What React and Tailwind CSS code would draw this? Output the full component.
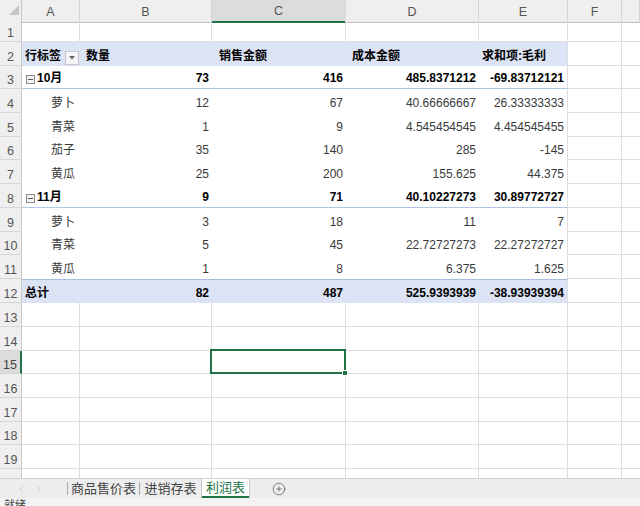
import { ChevronLeft, ChevronRight, CirclePlus } from "lucide-react";
import clsx from "clsx";

const COLS = "grid grid-cols-[22px_58px_132px_134px_133px_89px_54px_18px]";
const HEIGHTS = [24, 24, 23, 24, 24, 23, 24, 24, 24, 23, 24, 24, 24, 24, 23, 24, 24, 23, 24];
const H = { 24: "h-[24px]", 23: "h-[23px]" };

const pivot = [
  { type: "month", label: "10月", v: ["73", "416", "485.8371212", "-69.83712121"] },
  { type: "item", label: "萝卜", v: ["12", "67", "40.66666667", "26.33333333"] },
  { type: "item", label: "青菜", v: ["1", "9", "4.545454545", "4.454545455"] },
  { type: "item", label: "茄子", v: ["35", "140", "285", "-145"] },
  { type: "item", label: "黄瓜", v: ["25", "200", "155.625", "44.375"] },
  { type: "month", label: "11月", v: ["9", "71", "40.10227273", "30.89772727"] },
  { type: "item", label: "萝卜", v: ["3", "18", "11", "7"] },
  { type: "item", label: "青菜", v: ["5", "45", "22.72727273", "22.27272727"] },
  { type: "item", label: "黄瓜", v: ["1", "8", "6.375", "1.625"] },
  { type: "total", label: "总计", v: ["82", "487", "525.9393939", "-38.93939394"] },
];

function RowHead({ n, active }) {
  return (
    <div
      className={clsx(
        "flex items-end justify-center pb-[2px] text-[12.5px] leading-none border-b border-b-[#d6d6d6]",
        active
          ? "bg-[#dcdcdc] border-r-2 border-r-[#217346] text-[#444]"
          : "bg-[#efefef] border-r border-r-[#c8c8c8] text-[#555]"
      )}
    >
      {n}
    </div>
  );
}

function Empty({ last }) {
  return <div className={clsx("border-b border-[#dedede]", !last && "border-r")} />;
}

function Collapse() {
  return (
    <svg width="9" height="9" viewBox="0 0 9 9" className="mr-[2px] mb-[3px] shrink-0">
      <rect x="0.5" y="0.5" width="8" height="8" fill="#f4f4f4" stroke="#8a8a8a" />
      <line x1="2" y1="4.5" x2="7" y2="4.5" stroke="#555" />
    </svg>
  );
}

function PivotRow({ r }) {
  const base =
    r.type === "month"
      ? "font-bold text-black border-b border-b-[#b4c6e7]"
      : r.type === "total"
      ? "font-bold text-black bg-[#dbe3f4] border-t border-t-[#a9bde3]"
      : "text-[#3a3a3a]";
  return (
    <>
      <div
        className={clsx(
          base,
          "flex items-end pb-[1px] whitespace-nowrap",
          r.type === "item" ? "pl-[29px]" : r.type === "month" ? "pl-[4px]" : "pl-[3px]"
        )}
      >
        {r.type === "month" && <Collapse />}
        {r.label}
      </div>
      {r.v.map((v, i) => (
        <div
          key={i}
          className={clsx(
            base,
            "flex items-end justify-end pb-[1px] pr-[3px]",
            i === 3 && "border-r border-r-[#dedede]"
          )}
        >
          {v}
        </div>
      ))}
    </>
  );
}

function HeaderRow() {
  const hdr = "bg-[#dbe3f4] flex items-end pb-[1px] font-bold text-black whitespace-nowrap";
  return (
    <>
      <div className={clsx(hdr, "items-center justify-between pl-[3px] pr-px pt-[2px]")}>
        <span>行标签</span>
        <span className="w-[14px] h-[14px] bg-[#f7f7f7] border border-[#c4c4c4] flex items-center justify-center">
          <svg width="6" height="4" viewBox="0 0 6 4">
            <polygon points="0,0 6,0 3,3.5" fill="#666" />
          </svg>
        </span>
      </div>
      <div className={clsx(hdr, "pl-[6px]")}>数量</div>
      <div className={clsx(hdr, "pl-[7px]")}>销售金额</div>
      <div className={clsx(hdr, "pl-[6px]")}>成本金额</div>
      <div className={clsx(hdr, "pl-[3px] border-r border-r-[#dedede]")}>求和项:毛利</div>
    </>
  );
}

export default function App() {
  return (
    <div className="w-[640px] h-[506px] overflow-hidden bg-white flex flex-col text-[12px] font-['Liberation_Sans','Noto_Sans_CJK_SC',sans-serif]">
      <div className="h-[478px] overflow-hidden">
        {/* column letters */}
        <div className={clsx(COLS, "h-[18px]")}>
          <div className="bg-[#efefef] border-r border-b border-[#c8c8c8]">
            <svg width="21" height="17" viewBox="0 0 21 17">
              <polygon points="19,5 19,15 9,15" fill="#c4c4c4" />
            </svg>
          </div>
          {["A", "B", "C", "D", "E", "F", ""].map((c) => (
            <div
              key={c || "g"}
              className={clsx(
                "flex items-center justify-center pt-[2px] text-[12.5px] text-[#555] border-r border-r-[#d5d5d5]",
                c === "C"
                  ? "bg-[#dcdcdc] border-b-2 border-b-[#217346]"
                  : "bg-[#efefef] border-b border-b-[#c0c0c0]"
              )}
            >
              {c}
            </div>
          ))}
        </div>

        {HEIGHTS.map((h, i) => {
          const n = i + 1;
          let cells;
          if (n === 2) {
            cells = <HeaderRow />;
          } else if (n >= 3 && n <= 12) {
            cells = <PivotRow r={pivot[n - 3]} />;
          } else {
            cells = (
              <>
                <Empty />
                <Empty />
                {n === 15 ? (
                  <div className="relative border-r border-b border-[#dedede]">
                    <div className="absolute -left-[2px] -top-[2px] -right-[1px] -bottom-[1px] border-2 border-[#217346]" />
                    <div className="absolute -right-[3px] -bottom-[3px] w-[6px] h-[6px] bg-[#217346] border border-white" />
                  </div>
                ) : (
                  <Empty />
                )}
                <Empty />
                <Empty />
              </>
            );
          }
          return (
            <div key={n} className={clsx(COLS, H[h])}>
              <RowHead n={n} active={n === 15} />
              {cells}
              <Empty />
              <Empty last />
            </div>
          );
        })}

        {/* partial row 20 */}
        <div className={clsx(COLS, "h-[9px]")}>
          <div className="bg-[#efefef] border-r border-r-[#c8c8c8]" />
          <div className="border-r border-[#dedede]" />
          <div className="border-r border-[#dedede]" />
          <div className="border-r border-[#dedede]" />
          <div className="border-r border-[#dedede]" />
          <div className="border-r border-[#dedede]" />
          <div className="border-r border-[#dedede]" />
          <div />
        </div>
      </div>

      {/* sheet tabs */}
      <div className="h-[20px] flex bg-[#ededed] border-t border-[#cfcfcf] text-[13px] text-[#444]">
        <div className="w-[68px] flex items-center pl-[16px] gap-[8px] text-[#c2c2c2] border-r border-[#a8a8a8] my-[3px]">
          <ChevronLeft size={10} strokeWidth={2} />
          <ChevronRight size={10} strokeWidth={2} />
        </div>
        <div className="w-[72px] flex items-center justify-center border-r border-[#a8a8a8] my-[3px]">商品售价表</div>
        <div className="w-[61px] flex items-center justify-center">进销存表</div>
        <div className="w-[49px] flex items-center justify-center bg-white border-x border-[#c8c8c8] text-[#217346]">
          <span className="border-b-2 border-[#217346] px-[4px] leading-[16px]">利润表</span>
        </div>
        <div className="ml-[22px] flex items-center text-[#666]">
          <CirclePlus size={14} strokeWidth={1.4} />
        </div>
      </div>

      {/* status bar */}
      <div className="h-[8px] overflow-hidden bg-[#f3f3f3] pl-[4px] pt-[2px] text-[11px] leading-none text-[#444]">就绪</div>
    </div>
  );
}
